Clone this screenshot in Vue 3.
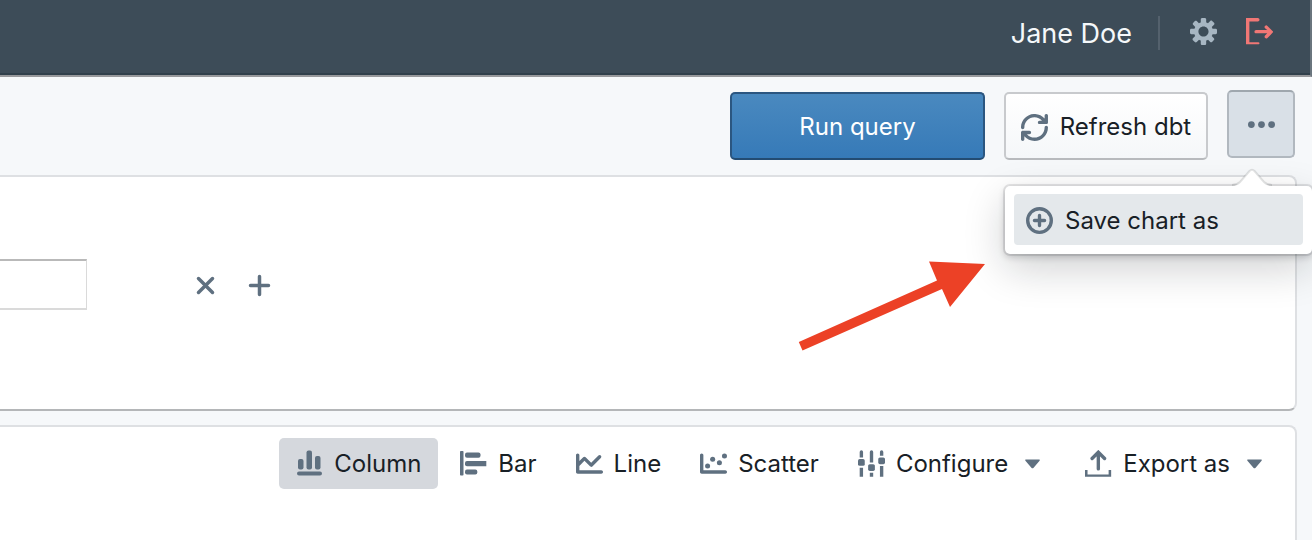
<script setup>
import { ref } from 'vue'

const chartType = ref('Column')
const dimension = ref('')
</script>

<template>
  <div class="page">
    <header class="navbar">
      <span class="user">Jane Doe</span>
      <span class="divider"></span>
      <button class="nav-btn settings" type="button" aria-label="Settings">
        <svg class="icon" viewBox="0 0 16 16"><path d="M15.19 6.39h-1.85c-.11-.37-.27-.71-.45-1.04l1.36-1.36c.31-.31.31-.82 0-1.13l-1.13-1.13c-.31-.31-.82-.31-1.13 0l-1.36 1.36c-.33-.17-.67-.33-1.04-.44V.79c0-.44-.36-.8-.8-.8h-1.6c-.44 0-.8.36-.8.8v1.86c-.39.12-.75.28-1.1.47l-1.3-1.3c-.3-.3-.79-.3-1.09 0L1.82 2.91c-.3.3-.3.79 0 1.09l1.3 1.3c-.2.34-.36.7-.48 1.09H.79c-.44 0-.8.36-.8.8v1.6c0 .44.36.8.8.8h1.85c.11.37.27.71.45 1.04l-1.36 1.36c-.31.31-.31.82 0 1.13l1.13 1.13c.31.31.82.31 1.13 0l1.36-1.36c.33.18.67.33 1.04.44v1.86c0 .44.36.8.8.8h1.6c.44 0 .8-.36.8-.8v-1.86c.39-.12.75-.28 1.1-.47l1.3 1.3c.3.3.79.3 1.09 0l1.09-1.09c.3-.3.3-.79 0-1.09l-1.3-1.3c.19-.35.36-.71.48-1.1h1.85c.44 0 .8-.36.8-.8v-1.6a.816.816 0 00-.81-.79zm-7.2 4.6c-1.66 0-3-1.34-3-3s1.34-3 3-3 3 1.34 3 3-1.34 3-3 3z" /></svg>
      </button>
      <button class="nav-btn logout" type="button" aria-label="Log out">
        <svg class="icon" viewBox="0 0 16 16"><path d="M7 14.4H2V2h5c.55 0 1-.45 1-1s-.45-1-1-1H0v15.6h7.6c.3-.3.4-.5.4-.6 0-.4-.45-.6-1-.6zm8.71-6.71l-3-3a1.003 1.003 0 00-1.42 1.42L12.59 7.1H6c-.55 0-1 .45-1 1s.45 1 1 1h6.59l-1.29 1.29c-.19.18-.3.43-.3.71a1.003 1.003 0 001.71.71l3-3c.18-.18.29-.43.29-.71 0-.28-.11-.23-.29-.41z" /></svg>
      </button>
    </header>

    <div class="toolbar">
      <button class="btn run" type="button">Run query</button>
      <button class="btn refresh" type="button">
        <svg class="icon" viewBox="0 0 16 16"><path d="M14.99 6.99c-.55 0-1 .45-1 1 0 3.31-2.69 6-6 6-1.77 0-3.36-.78-4.46-2h1.46c.55 0 1-.45 1-1s-.45-1-1-1h-4c-.55 0-1 .45-1 1v4c0 .55.45 1 1 1s1-.45 1-1v-1.74a7.95 7.95 0 006 2.74c4.42 0 8-3.58 8-8 0-.55-.45-1-1-1zm0-7c-.55 0-1 .45-1 1v1.74a7.95 7.95 0 00-6-2.74c-4.42 0-8 3.58-8 8 0 .55.45 1 1 1s1-.45 1-1c0-3.31 2.69-6 6-6 1.77 0 3.36.78 4.46 2h-1.46c-.55 0-1 .45-1 1s.45 1 1 1h4c.55 0 1-.45 1-1v-4c0-.56-.45-1-1-1z" /></svg>
        Refresh dbt
      </button>
      <div class="more-wrap">
        <button class="btn more" type="button" aria-label="More actions" aria-expanded="true">
          <svg class="icon" viewBox="0 0 16 16"><circle cx="2" cy="8" r="2" /><circle cx="8" cy="8" r="2" /><circle cx="14" cy="8" r="2" /></svg>
        </button>
        <div class="popover">
          <svg class="tip" viewBox="0 0 40 20">
            <path class="tip-fill" d="M0 18C4 18 6 16 8 14L17.500 3Q20 .5 22.500 3L32 14C34 16 36 18 40 18V20H0Z" />
            <path class="tip-line" d="M0 17C4 17 6 16 8 14L17.500 3Q20 .5 22.500 3L32 14C34 16 36 17 40 17" />
          </svg>
          <button class="menu-item" type="button">
            <svg class="icon" viewBox="0 0 16 16"><g class="stroke"><circle cx="8" cy="8" r="7" /><path d="M8 5v6M5 8h6" /></g></svg>
            Save chart as
          </button>
        </div>
      </div>
    </div>

    <section class="card filters">
      <input v-model="dimension" class="field" type="text" aria-label="Filter value" />
      <button class="plain remove" type="button" aria-label="Remove filter">
        <svg class="icon" viewBox="0 0 27 27"><path class="thick" d="M6.500 6.500l14 14M20.500 6.500l-14 14" /></svg>
      </button>
      <button class="plain add" type="button" aria-label="Add filter">
        <svg class="icon" viewBox="0 0 27 27"><path class="thick" d="M13.500 4.500v18M4.500 13.500h18" /></svg>
      </button>
    </section>

    <section class="card chart">
      <div class="tabs">
        <button class="tab" :class="{ active: chartType === 'Column' }" type="button" @click="chartType = 'Column'">
          <svg class="icon" viewBox="0 0 27 27"><rect x="2" y="9" width="5.500" height="10.500" rx="2" /><rect x="10.500" y="0.500" width="5.500" height="19" rx="2" /><rect x="19" y="6" width="5.500" height="13.500" rx="2" /><rect x="1" y="21.500" width="25" height="4" rx="2" /></svg>
          Column
        </button>
        <button class="tab" :class="{ active: chartType === 'Bar' }" type="button" @click="chartType = 'Bar'">
          <svg class="icon" viewBox="0 0 27 27"><rect x="0" y="1" width="3.500" height="24.500" rx="0.800" /><rect x="5" y="2.500" width="15.500" height="5.300" rx="2" /><path d="M7 11h19.300v5.200H7a2 2 0 01-2-2V13a2 2 0 012-2z" /><rect x="5" y="19.500" width="12.300" height="5" rx="2" /></svg>
          Bar
        </button>
        <button class="tab" :class="{ active: chartType === 'Line' }" type="button" @click="chartType = 'Line'">
          <svg class="icon" viewBox="0 0 16 16"><path d="M15 12H2V9.410l3-3 3.290 3.290c.19.18.44.3.71.3.28 0 .53-.11.71-.29l5-5a1.003 1.003 0 00-1.420-1.420L9 7.590 5.710 4.290C5.530 4.110 5.280 4 5 4c-.28 0-.53.11-.71.29L2 6.590V3c0-.55-.45-1-1-1s-1 .45-1 1v10c0 .55.45 1 1 1h14c.55 0 1-.45 1-1s-.45-1-1-1z" /></svg>
          Line
        </button>
        <button class="tab" :class="{ active: chartType === 'Scatter' }" type="button" @click="chartType = 'Scatter'">
          <svg class="icon" viewBox="0 0 16 16"><path d="M15 12H2V3c0-.55-.45-1-1-1s-1 .45-1 1v10c0 .55.45 1 1 1h14c.55 0 1-.45 1-1s-.45-1-1-1z" /><circle cx="4.500" cy="9.500" r="1.500" /><circle cx="7.500" cy="5.500" r="1.500" /><circle cx="11.500" cy="7.500" r="1.500" /><circle cx="14.500" cy="3.500" r="1.500" /></svg>
          Scatter
        </button>
        <button class="tab" type="button">
          <svg class="icon" viewBox="0 0 16 16"><path d="M1 4.400V1.200a1 1 0 012 0v3.200zM1 10.500h2v5.300H1zM7 7.400V1.200a1 1 0 012 0v6.200zM7 13.500h2v2.300H7zM13 3.400V1.200a1 1 0 012 0v2.200zM13 9.500h2v6.300h-2z" /><rect x="0" y="5.400" width="4" height="4" rx="1" /><rect x="6" y="8.400" width="4" height="4" rx="1" /><rect x="12" y="4.400" width="4" height="4" rx="1" /></svg>
          Configure
          <svg class="icon" viewBox="0 0 27 27"><path d="M7 9.500h13q1.500 0 .6 1.200l-6 7q-1.100 1-2.200 0l-6-7q-.9-1.200.6-1.200z" /></svg>
        </button>
        <button class="tab" type="button">
          <svg class="icon" viewBox="0 0 16 16"><path d="M0 11.800h1.500v2.700h12.500v-2.700h1.500v4H0z" /><path class="arrow" d="M7.900 11.200V2M4.200 5l3.700-3.700L11.600 5" /></svg>
          Export as
          <svg class="icon" viewBox="0 0 27 27"><path d="M7 9.500h13q1.500 0 .6 1.200l-6 7q-1.100 1-2.200 0l-6-7q-.9-1.200.6-1.200z" /></svg>
        </button>
      </div>
    </section>

    <svg class="pointer" viewBox="0 0 190 94"><path d="M2.500 90.500L-1.200 82 137 20.500 129 1.500 185 4 150 47 142 29 2.500 90.500z" /></svg>
  </div>
</template>

<style>
body {
  margin: 0;
  background: #f6f8fa;
}
</style>

<style scoped>
.page {
  position: relative;
  display: flex;
  flex-direction: column;
  min-height: 100vh;
  overflow: hidden;
  box-sizing: border-box;
  background: #f6f8fa;
  color: #182026;
  font-family: Inter, "Liberation Sans", sans-serif;
  font-size: 24px;
  line-height: 32px;
}

button {
  margin: 0;
  border: 0;
  background: none;
  color: inherit;
  font: inherit;
  white-space: nowrap;
  cursor: pointer;
}

.icon {
  display: block;
  flex: none;
  width: 27px;
  height: 27px;
  fill: #5f7080;
}

.navbar {
  display: flex;
  align-items: center;
  justify-content: flex-end;
  box-sizing: border-box;
  height: 77px;
  padding: 0 37px 9px 0;
  border-right: 2px solid #6a757e;
  border-bottom: 2px solid #98999c;
  background: #3d4c58;
  box-shadow: inset 0 -2px #31404b;
}

.user {
  padding-top: 2px;
  color: #f5f8fa;
  font-size: 27px;
}

.divider {
  width: 2px;
  height: 34px;
  margin: 0 30px 0 26px;
  background: #54616d;
}

.nav-btn {
  padding: 0 0 4px;
}

.settings .icon {
  fill: #a7b6c2;
}

.logout {
  margin-left: 29px;
}

.logout .icon {
  fill: #f17775;
}

.toolbar {
  position: relative;
  z-index: 1;
  display: flex;
  justify-content: flex-end;
  gap: 19px;
  padding: 15px 17px 15px 0;
}

.btn {
  display: flex;
  align-items: center;
  justify-content: center;
  box-sizing: border-box;
  height: 68px;
  padding: 2px 0 0;
  border: 2px solid #c8cacd;
  border-bottom-color: #b8babd;
  border-radius: 5px;
}

.run {
  width: 255px;
  border-color: #2b5680;
  border-bottom-color: #234c73;
  background: linear-gradient(#4a89bf, #367ab8);
  color: #fff;
}

.refresh {
  width: 204px;
  gap: 12px;
  background: linear-gradient(#fff, #f5f7f9);
}

.more-wrap {
  position: relative;
  margin-top: -2px;
}

.more {
  width: 68px;
  padding: 0;
  border-color: #9fa7ae #b1b8bf #b1b8bf;
  background: #d9e0e7;
}

.popover {
  position: absolute;
  top: 96px;
  right: -17px;
  width: 307px;
  box-sizing: border-box;
  padding: 8px 9px 9px;
  border-radius: 5px;
  background: #fff;
  box-shadow: 0 0 0 2px rgba(16, 22, 26, 0.1), 0 3px 7px rgba(16, 22, 26, 0.2), 0 14px 41px rgba(16, 22, 26, 0.2);
}

.tip {
  position: absolute;
  top: -18px;
  right: 40px;
  width: 40px;
  height: 20px;
}

.tip-fill {
  fill: #fff;
}

.tip-line {
  fill: none;
  stroke: rgba(16, 22, 26, 0.12);
  stroke-width: 2;
}

.menu-item {
  display: flex;
  align-items: center;
  gap: 12px;
  width: 100%;
  height: 51px;
  padding: 2px 12px 0;
  border-radius: 4px;
  background: #e4e8eb;
}

.stroke {
  fill: none;
  stroke: #5f7080;
  stroke-width: 2;
  stroke-linecap: round;
}

.card {
  box-sizing: border-box;
  margin-right: 15px;
  border: 2px solid #dee0e3;
  border-left: 0;
  background: #fff;
}

.filters {
  display: flex;
  align-items: center;
  height: 236px;
  padding-bottom: 17px;
  border-bottom-color: #b4b6b8;
  border-radius: 0 8px 8px 0;
}

.field {
  width: 87px;
  height: 51px;
  box-sizing: border-box;
  padding: 0 12px;
  border: 2px solid #dadada;
  border-top-color: #b9b9b9;
  border-right-width: 1px;
  border-left: 0;
  background: #fff;
  font: inherit;
}

.plain {
  padding: 2px 0 0;
}

.remove {
  margin-left: 105px;
}

.add {
  margin-left: 27px;
}

.thick {
  stroke: #5f7080;
  stroke-width: 3.5;
  stroke-linecap: round;
}

.chart {
  flex: 1;
  margin-top: 14px;
  border-bottom: 0;
  border-radius: 0 8px 0 0;
}

.tabs {
  display: flex;
  justify-content: flex-end;
  gap: 5px;
  padding: 11px 10px 0 0;
}

.tab {
  display: flex;
  align-items: center;
  gap: 11px;
  height: 51px;
  padding: 0 17px;
  border-radius: 5px;
}

.tab.active {
  background: #d5d8dd;
}

.arrow {
  fill: none;
  stroke: #5f7080;
  stroke-width: 2;
  stroke-linecap: round;
}

.pointer {
  position: absolute;
  top: 260px;
  right: 322px;
  width: 190px;
  height: 94px;
  overflow: visible;
  fill: #ec4126;
}
</style>
